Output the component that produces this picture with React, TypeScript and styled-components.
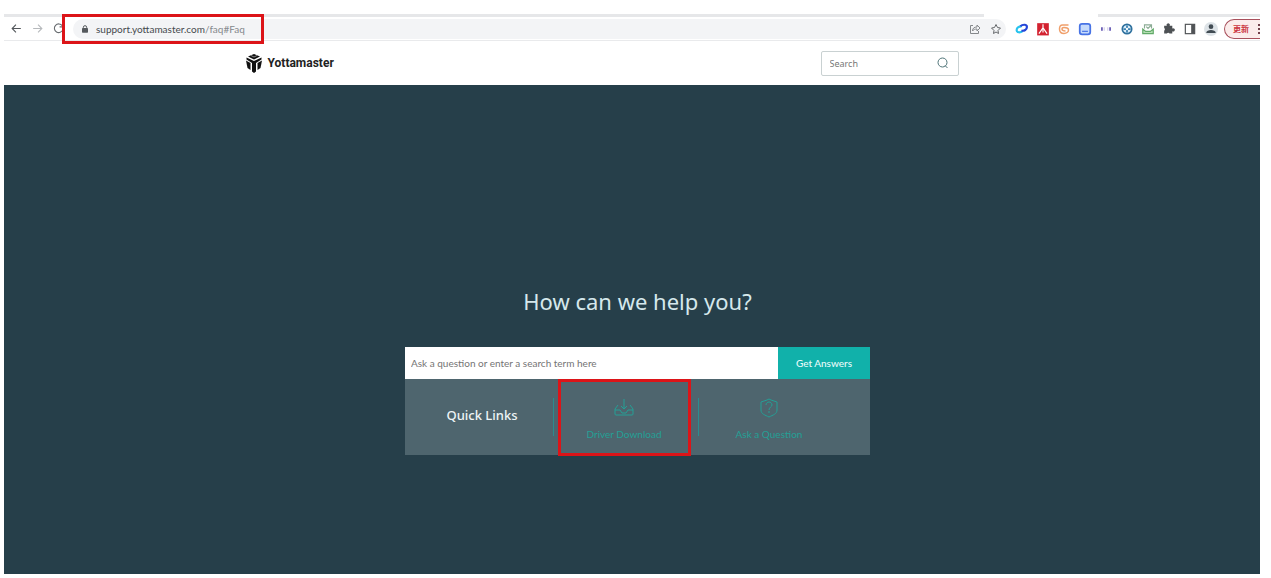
import React from "react";
import styled, { createGlobalStyle } from "styled-components";

const GlobalStyle = createGlobalStyle`
  * { box-sizing: border-box; }
  body { margin: 0; background: #fff; font-family: Lato, "Noto Sans CJK SC", sans-serif; }
  button, input { font-family: inherit; margin: 0; }
`;

const Screen = styled.div`
  min-height: 100vh;
  padding: 14px 11px 4px 4px;
  display: flex;
  flex-direction: column;
`;

const TabStrip = styled.div`
  height: 3px;
  display: flex;
  justify-content: space-between;
`;

const StripPart = styled.div<{ $grow?: boolean }>`
  background: #e6e7e9;
  flex: ${(p) => (p.$grow ? "1" : "0 0 162px")};
  margin-right: ${(p) => (p.$grow ? "114px" : "0")};
`;

const Toolbar = styled.div`
  position: relative;
  height: 24px;
  display: flex;
  align-items: center;
  padding-left: 2px;
  border-bottom: 1px solid #e9eaec;
`;

const IconButton = styled.button`
  width: 21px;
  height: 20px;
  padding: 0;
  border: 0;
  background: none;
  display: flex;
  align-items: center;
  justify-content: center;
  flex: none;
`;

const Omnibox = styled.div`
  flex: 1;
  min-width: 0;
  height: 20px;
  margin: 0 5px 0 4px;
  padding: 0 0 0 8px;
  border-radius: 10px;
  background: #f3f4f6;
  display: flex;
  align-items: center;
`;

const Address = styled.a`
  flex: 1;
  margin-left: 7px;
  font-size: 10px;
  line-height: 16px;
  color: #45494d;
  text-decoration: none;
  white-space: nowrap;
  span { color: #85898d; }
`;

const UpdateButton = styled.button`
  flex: 0 0 36px;
  height: 20px;
  margin-left: 3px;
  padding: 0 0 0 8px;
  border: 1px solid #a8505c;
  border-right: 0;
  border-radius: 10px 0 0 10px;
  background: #fbeceb;
  color: #cb3540;
  font-size: 8px;
  font-weight: 700;
  line-height: 16px;
  display: flex;
  align-items: center;
  justify-content: space-between;
`;

const Highlight = styled.div`
  position: absolute;
  border: 3px solid #dc1418;
  pointer-events: none;
`;

const AddressHighlight = styled(Highlight)`
  left: 58px;
  top: -3px;
  width: 202px;
  height: 30px;
`;

const LinkHighlight = styled(Highlight)`
  inset: 0 7px -1px 5px;
`;

const Header = styled.header`
  height: 44px;
  padding-right: 60px;
  display: flex;
  align-items: center;
  justify-content: center;
`;

const HeaderInner = styled.div`
  width: 713px;
  display: flex;
  align-items: center;
  justify-content: space-between;
`;

const Brand = styled.a`
  display: flex;
  align-items: center;
  gap: 6px;
  color: #222;
  font-family: Roboto, sans-serif;
  font-size: 12px;
  font-weight: 700;
  line-height: 20px;
  text-decoration: none;
`;

const SiteSearch = styled.form`
  width: 138px;
  height: 25px;
  padding: 0 4px 0 8px;
  border: 1px solid #c9d1d2;
  border-radius: 2px;
  display: flex;
  align-items: center;
`;

const SiteSearchInput = styled.input`
  flex: 1;
  min-width: 0;
  padding: 0;
  border: 0;
  outline: 0;
  background: none;
  font-family: "Noto Sans", sans-serif;
  font-size: 9px;
  color: #555;
  &::placeholder { color: #777; opacity: 1; }
`;

const Hero = styled.main`
  flex: 1;
  padding: 200px 0 40px 11px;
  background: #263f4a;
  display: flex;
  flex-direction: column;
  align-items: center;
`;

const Title = styled.h1`
  margin: 0 0 30px;
  font-family: "Noto Sans", sans-serif;
  font-size: 22px;
  font-weight: 400;
  line-height: 32px;
  color: #d5e8ec;
`;

const Panel = styled.section`
  width: 465px;
  max-width: 100%;
`;

const AskForm = styled.form`
  height: 32px;
  display: flex;
`;

const AskInput = styled.input`
  flex: 1;
  min-width: 0;
  padding: 0 6px;
  border: 0;
  border-radius: 0;
  outline: 0;
  background: #fff;
  font-size: 10px;
  color: #555;
  &::placeholder { color: #747474; opacity: 1; }
`;

const AskButton = styled.button`
  width: 92px;
  padding: 0;
  border: 0;
  background: #11b1aa;
  color: #e9fbfa;
  font-size: 10px;
  font-weight: 500;
`;

const QuickLinks = styled.nav`
  height: 76px;
  background: #4e656e;
  display: flex;
  align-items: stretch;
`;

const QuickTitle = styled.h2`
  width: 148px;
  margin: 0;
  padding: 0 0 4px 6px;
  display: flex;
  align-items: center;
  justify-content: center;
  font-family: "Noto Sans", sans-serif;
  font-size: 13px;
  font-weight: 500;
  line-height: 20px;
  color: #eef5f7;
`;

const QuickCell = styled.div`
  position: relative;
  width: 145px;
  display: flex;
  align-items: center;
  &::before {
    content: "";
    width: 1px;
    height: 38px;
    background: #2c8c8f;
  }
`;

const QuickLink = styled.a`
  flex: 1;
  padding: 6px 4px 0 0;
  display: flex;
  flex-direction: column;
  align-items: center;
  gap: 8px;
  color: #24a096;
  font-size: 10px;
  line-height: 16px;
  text-decoration: none;
`;

const Svg = ({ size = 14, children }: { size?: number; children: React.ReactNode }) => (
  <svg width={size} height={size} viewBox="0 0 24 24" fill="none" stroke="currentColor" strokeWidth={2} aria-hidden="true">
    {children}
  </svg>
);

const extensions: { name: string; icon: React.ReactNode }[] = [
  {
    name: "Link",
    icon: (
      <Svg size={13}>
        <path d="M14 17c-4 3-11 3-11-2 0-4 4-7 9-7" stroke="#28c3ee" strokeWidth="4" />
        <path d="M10 8c4-4 12-4 12 1 0 5-5 8-10 7" stroke="#2546d8" strokeWidth="4" />
      </Svg>
    ),
  },
  {
    name: "Reader",
    icon: (
      <Svg>
        <rect x="2" y="2" width="20" height="21" fill="#d32230" stroke="none" />
        <path d="M12 4v6M5 20l7-10 7 10M12 13v5" stroke="#fff" strokeWidth="2" />
      </Svg>
    ),
  },
  {
    name: "Swirl",
    icon: (
      <Svg size={12}>
        <path d="M21 4H9C4 4 3 8 3 12c0 6 4 9 9 9s9-3 9-7-4-5-9-5c-3 0-4 2-4 3 0 3 3 4 7 4" stroke="#f0a06c" strokeWidth="3" />
      </Svg>
    ),
  },
  {
    name: "Window",
    icon: (
      <Svg>
        <rect x="3" y="3" width="18" height="18" rx="4" fill="#c5dafb" stroke="#4773e5" strokeWidth="3" />
        <path d="M7 16h10" stroke="#4773e5" />
      </Svg>
    ),
  },
  {
    name: "Brackets",
    icon: (
      <Svg>
        <path d="M5 9v6M19 9v6" stroke="#685bb5" strokeWidth="3" />
        <path d="M9 9v6M15 9v6" stroke="#d3cfea" strokeWidth="2" />
      </Svg>
    ),
  },
  {
    name: "Compass",
    icon: (
      <Svg>
        <circle cx="12" cy="12" r="8" fill="#dceefa" stroke="#2e709d" strokeWidth="3" />
        <path d="M12 6v12M6 12h12" stroke="#3980b0" strokeWidth="3" />
        <circle cx="12" cy="12" r="2" fill="#fff" stroke="none" />
      </Svg>
    ),
  },
  {
    name: "Inbox",
    icon: (
      <Svg>
        <path d="M3 12v8h18v-8l-5 4H8z" fill="#b5dfb3" stroke="#61aa68" />
        <path d="M6 11V5h12v6M9 8l3 3 5-5" stroke="#8cac95" />
      </Svg>
    ),
  },
  {
    name: "Extensions",
    icon: (
      <Svg size={13}>
        <path d="M4 7h5a3 3 0 1 1 5 0h5v5a3 3 0 1 1 0 5v4h-5a3 3 0 0 0-5 0H4v-5a3 3 0 0 0 0-5z" fill="#4d5154" stroke="none" />
      </Svg>
    ),
  },
  {
    name: "Side panel",
    icon: (
      <Svg>
        <rect x="4" y="4" width="16" height="16" stroke="#505356" />
        <path d="M14 4h6v16h-6z" fill="#505356" stroke="none" />
      </Svg>
    ),
  },
  {
    name: "Profile",
    icon: (
      <Svg>
        <circle cx="12" cy="12" r="12" fill="#dde3e7" stroke="none" />
        <circle cx="12" cy="8" r="4" fill="#414b53" stroke="none" />
        <path d="M4 18c0-6 16-6 16 0v1H4z" fill="#414b53" stroke="none" />
      </Svg>
    ),
  },
];

const BrowserBar = () => (
  <>
    <TabStrip>
      <StripPart $grow />
      <StripPart />
    </TabStrip>
    <Toolbar>
      <IconButton aria-label="Back">
        <Svg size={13}><g stroke="#53575b"><path d="M20 12H5M11 5l-7 7 7 7" /></g></Svg>
      </IconButton>
      <IconButton aria-label="Forward">
        <Svg size={13}><g stroke="#b6b9bc"><path d="M4 12h15M13 5l7 7-7 7" /></g></Svg>
      </IconButton>
      <IconButton aria-label="Reload">
        <Svg size={13}><path d="M19 7a8 8 0 1 0 1 7M20 3v6h-6" stroke="#686c70" /></Svg>
      </IconButton>
      <Omnibox>
        <Svg size={8}>
          <rect x="3" y="9" width="18" height="14" rx="2" fill="#55595d" stroke="none" />
          <path d="M7 10V7a5 5 0 0 1 10 0v3M8 15h8" stroke="#55595d" strokeWidth="3" />
        </Svg>
        <Address href="#Faq">support.yottamaster.com<span>/faq#Faq</span></Address>
        <IconButton aria-label="Share">
          <Svg size={12}><path d="M8 5H3v16h16v-5M7 16c0-6 4-8 9-8V4l6 6-6 6v-4c-4 0-7 1-9 4z" stroke="#85888b" /></Svg>
        </IconButton>
        <IconButton aria-label="Bookmark">
          <Svg size={12}><path d="m12 3 3 6 6 1-5 5 1 6-5-3-5 3 1-6-5-5 6-1z" stroke="#66696c" strokeWidth="2" /></Svg>
        </IconButton>
      </Omnibox>
      {extensions.map((e) => (
        <IconButton key={e.name} aria-label={e.name}>{e.icon}</IconButton>
      ))}
      <UpdateButton>
        更新
        <svg width="2" height="12" viewBox="0 0 2 12" fill="#71404a" aria-hidden="true">
          <path d="M0 1h2v2H0zM0 5h2v2H0zM0 9h2v2H0z" />
        </svg>
      </UpdateButton>
      <AddressHighlight />
    </Toolbar>
  </>
);

const Logo = () => (
  <svg width="16" height="19" viewBox="0 0 32 38" aria-hidden="true">
    <path d="M16 0 28 5 16 11 4 5z" fill="#111" />
    <path d="M0 13 9 18v14L3 28z" fill="#111" />
    <path d="M32 13 23 18v14l6-4z" fill="#111" />
    <path d="M1 7 16 14 31 7v4L20 18v17l-4 3-4-3V18L1 11z" fill="#111" />
    <path d="M10 3l6 3 6-3" fill="none" stroke="#fff" strokeWidth="1" />
  </svg>
);

export default function App() {
  return (
    <>
      <GlobalStyle />
      <Screen>
        <BrowserBar />
        <Header>
          <HeaderInner>
            <Brand href="#home"><Logo />Yottamaster</Brand>
            <SiteSearch>
              <SiteSearchInput aria-label="Search" placeholder="Search" />
              <IconButton type="button" aria-label="Submit search">
                <Svg size={12}><g stroke="#4f7478"><circle cx="11" cy="11" r="9" /><path d="m16 17 5 5" /></g></Svg>
              </IconButton>
            </SiteSearch>
          </HeaderInner>
        </Header>
        <Hero>
          <Title>How can we help you?</Title>
          <Panel>
            <AskForm>
              <AskInput aria-label="Ask a question" placeholder="Ask a question or enter a search term here" />
              <AskButton type="button">Get Answers</AskButton>
            </AskForm>
            <QuickLinks>
              <QuickTitle>Quick Links</QuickTitle>
              <QuickCell>
                <QuickLink href="#driver">
                  <svg width="20" height="20" viewBox="0 0 20 20" fill="none" stroke="currentColor" aria-hidden="true">
                    <path d="M10 1v10M7 8l3 3 3-3M4 7 1 11v5q0 1 1 1h16q1 0 1-1v-5l-3-4M1 12h5l2 3h4l2-3h5" />
                  </svg>
                  Driver Download
                </QuickLink>
                <LinkHighlight />
              </QuickCell>
              <QuickCell>
                <QuickLink href="#ask">
                  <svg width="20" height="20" viewBox="0 0 20 20" fill="none" stroke="currentColor" aria-hidden="true">
                    <path d="m10 1 2 1 6 2v8c0 4-4 5-8 7-4-2-8-3-8-7V4l6-2zM7 7c0-4 6-4 6 0 0 2-3 2-3 5M10 13v2" />
                  </svg>
                  Ask a Question
                </QuickLink>
              </QuickCell>
            </QuickLinks>
          </Panel>
        </Hero>
      </Screen>
    </>
  );
}
